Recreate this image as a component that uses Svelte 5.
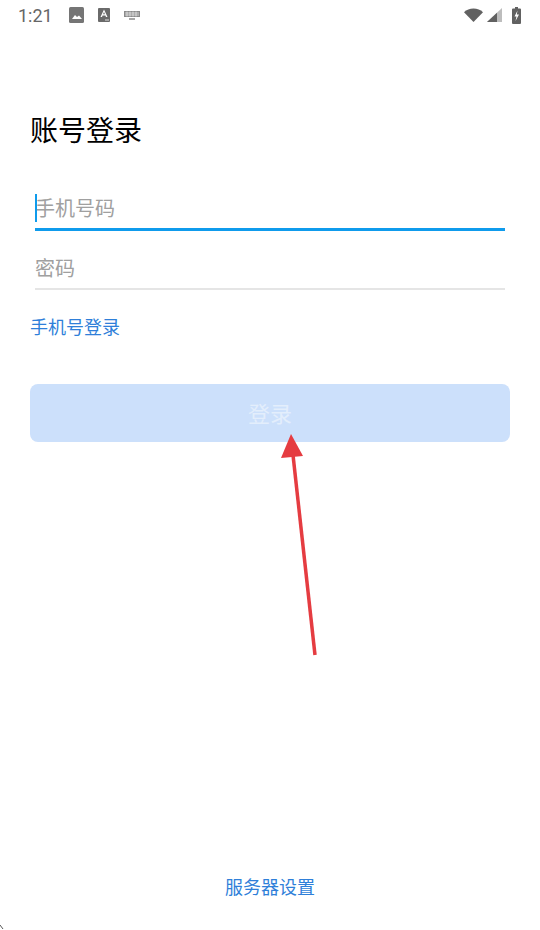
<script lang="ts">
  let phone = $state("");
  let password = $state("");
</script>

<div class="page">
  <div class="status">
    <span class="time">1:21</span>
    <svg class="ic" width="15" height="16" viewBox="0 0 15 16"><rect width="15" height="16" rx="1.500" fill="#757575"/><path d="M3 12l3-4 2 2 2-1.500 3 3.500z" fill="#fff"/></svg>
    <svg class="ic2" width="12" height="14" viewBox="0 0 12 14"><rect width="12" height="14" rx="1" fill="#6a6a6a"/><path d="M2.500 9L6 1.500 9.500 9H8L7.400 7.500H4.600L4 9zM5 6.300h2L6 4z" fill="#fff" fill-rule="evenodd"/><path d="M7 12h4" stroke="#ddd" stroke-width="1"/></svg>
    <svg class="ic3" width="16" height="9" viewBox="0 0 16 9"><path d="M0 0h16v6H0z" fill="#8a8a8a"/><path d="M1 2h14M1 4h14M3 .5v5M6 .5v5M9 .5v5M12 .5v5" stroke="#fff" stroke-width=".6"/><path d="M5 8h6" stroke="#8a8a8a" stroke-width="1.500"/></svg>
    <span class="spacer"></span>
    <svg width="19" height="14" viewBox="0 0 19 14"><path d="M0 4.200C2.500 1.800 5.800 0.500 9.500 0.500S16.500 1.800 19 4.200L9.500 14z" fill="#616161"/></svg>
    <svg class="sig" width="15" height="14" viewBox="0 0 15 14"><path d="M15 0v14H0z" fill="#bdbdbd"/><path d="M10 4.700V14H0z" fill="#616161"/></svg>
    <svg class="bat" width="9" height="17" viewBox="0 0 9 17"><path d="M3 0h3v1.500h2a1 1 0 0 1 1 1V16a1 1 0 0 1-1 1H1a1 1 0 0 1-1-1V2.500a1 1 0 0 1 1-1h2z" fill="#616161"/><path d="M5.500 3.500L2.500 9.500h2l-1 4.500L7 7.500H4.800z" fill="#fff"/></svg>
  </div>

  <main class="body">
    <h1>账号登录</h1>
    <label class="field focused">
      <span class="caret"></span>
      <input bind:value={phone} placeholder="手机号码" />
    </label>
    <label class="field">
      <input bind:value={password} type="password" placeholder="密码" />
    </label>
    <button class="link switch">手机号登录</button>
    <button class="submit" disabled>登录</button>
  </main>

  <footer>
    <button class="link">服务器设置</button>
  </footer>

  <svg class="arrow" width="540" height="930" viewBox="0 0 540 930">
    <path d="M315 655L293 455" stroke="#e53c41" stroke-width="3.500" fill="none"/>
    <path d="M291 434L281 458L303 456z" fill="#e53c41"/>
    <path d="M0 925L3 929" stroke="#555" stroke-width="1" fill="none"/>
  </svg>
</div>

<style>
  :global(body) {
    margin: 0;
    background: #fff;
  }
  .page {
    position: relative;
    width: 540px;
    height: 930px;
    display: flex;
    flex-direction: column;
    overflow: hidden;
    font-family: "Liberation Sans", "Noto Sans CJK SC", sans-serif;
  }
  .status {
    height: 30px;
    display: flex;
    align-items: center;
    padding: 0 19px 0 18px;
    box-sizing: border-box;
    color: #666;
  }
  .time {
    font-family: Roboto, sans-serif;
    font-size: 18px;
    width: 51px;
  }
  .ic2 { margin-left: 14px; }
  .ic3 { margin-left: 14px; }
  .spacer { flex: 1; }
  .sig { margin-left: 4px; }
  .bat { margin-left: 10px; }
  .body {
    flex: 1;
    display: flex;
    flex-direction: column;
    padding: 0 30px;
  }
  h1 {
    margin: 82px 0 0;
    font-size: 28px;
    line-height: 40px;
    font-weight: 400;
    color: #000;
  }
  .field {
    position: relative;
    display: flex;
    align-items: center;
    height: 59px;
    padding-top: 19px;
    margin: 0 5px;
    border-bottom: 2px solid #e5e5e5;
    box-sizing: border-box;
  }
  .field.focused {
    margin-top: 19px;
    height: 60px;
    padding-top: 19px;
    border-bottom: 3px solid #0f9bec;
  }
  .caret {
    position: absolute;
    left: 0;
    top: 23px;
    width: 2px;
    height: 28px;
    background: #0f9bec;
  }
  input {
    flex: 1;
    min-width: 0;
    border: 0;
    outline: 0;
    padding: 0;
    background: transparent;
    font: inherit;
    font-size: 20px;
    color: #333;
  }
  input::placeholder {
    color: #a0a0a0;
    opacity: 1;
  }
  .link {
    border: 0;
    padding: 0;
    background: none;
    font: inherit;
    font-size: 18px;
    color: #2f7fd9;
    cursor: pointer;
  }
  .switch {
    align-self: flex-start;
    margin-top: 26px;
    line-height: 24px;
  }
  .submit {
    margin-top: 44px;
    height: 58px;
    padding: 0 0 3px;
    border: 0;
    border-radius: 8px;
    background: #cce0fb;
    color: #e3eefc;
    font: inherit;
    font-size: 22px;
  }
  footer {
    display: flex;
    justify-content: center;
    padding-bottom: 30px;
  }
  footer .link { line-height: 24px; }
  .arrow {
    position: absolute;
    left: 0;
    top: 0;
    pointer-events: none;
  }
</style>
